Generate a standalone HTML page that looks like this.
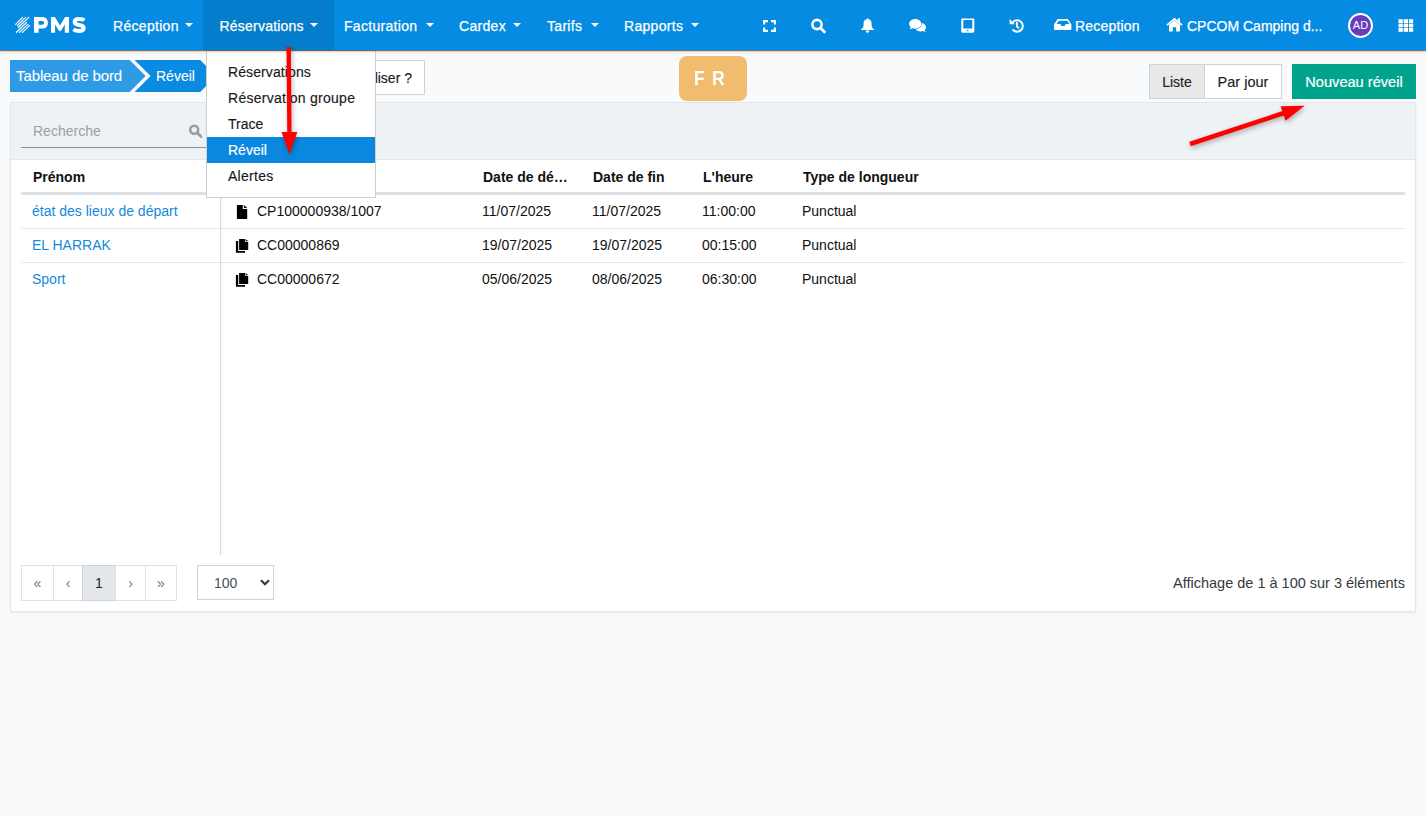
<!DOCTYPE html>
<html><head><meta charset="utf-8">
<style>
*{box-sizing:border-box;margin:0;padding:0}
html,body{width:1426px;height:816px;overflow:hidden}
body{background:#f9fafc;font-family:"Liberation Sans",sans-serif;position:relative;color:#212529}
.abs{position:absolute;white-space:nowrap}
#nav{position:absolute;z-index:5;left:0;top:0;width:1426px;height:50px;background:#058be2;box-shadow:0 1px 1px rgba(50,30,20,.55),0 2px 3px rgba(0,0,0,.12)}
.ni{position:absolute;top:1px;height:50px;color:#fff;font-size:14px;line-height:50px;white-space:nowrap;letter-spacing:.3px;-webkit-text-stroke:.25px #fff}
.cr{position:absolute;top:23px;width:0;height:0;border-left:4px solid transparent;border-right:4px solid transparent;border-top:4px solid #fff}
.caret{display:inline-block;width:0;height:0;border-left:4px solid transparent;border-right:4px solid transparent;border-top:4px solid #fff;vertical-align:middle;margin-left:8px;position:relative;top:-1px}
#active{position:absolute;left:203px;top:0;width:131px;height:50px;background:#047dcc}
.ico{position:absolute}
#panel{position:absolute;left:10px;top:102px;width:1406px;height:510px;background:#fff;border:1px solid #e3e7ea;box-shadow:0 1px 2px rgba(0,0,0,.08)}
#phead{position:absolute;left:0;top:0;width:1404px;height:57px;background:#eef2f5;border-bottom:1px solid #e3e7ea}
.th{position:absolute;top:169px;font-size:14px;font-weight:bold;color:#111;white-space:nowrap}
.td{position:absolute;font-size:14px;color:#111;white-space:nowrap}
.lnk{color:#1388dc}
.sep{position:absolute;left:21px;width:1384px;height:1px;background:#e5e8eb}
#dd{position:absolute;left:206px;top:50px;width:170px;height:148px;background:#fff;border:1px solid #cdd0d3}
.di{position:absolute;left:0;width:168px;height:26px;font-size:14px;line-height:26px;padding-left:21px;color:#16191c;white-space:nowrap;letter-spacing:.28px;-webkit-text-stroke:.15px #16191c}
.pg{position:absolute;top:565px;height:36px;border:1px solid #dee2e6;background:#fff;color:#6c757d;font-size:14px;line-height:35px;text-align:center}
</style></head><body>

<div id="nav">
  <div id="active"></div>
  <!-- logo -->
  <svg class="ico" style="left:0;top:0" width="100" height="50" viewBox="0 0 100 50">
    <g stroke="#fff" stroke-width="1.25" stroke-linecap="round">
      <line x1="15.6" y1="24.4" x2="22.6" y2="17.4"/><line x1="17.4" y1="25.6" x2="25.6" y2="17.4"/><line x1="18.6" y1="27.3" x2="28.7" y2="17.4"/>
      <line x1="16.5" y1="32.3" x2="26.6" y2="22.4"/><line x1="19.5" y1="32.4" x2="27.7" y2="24.4"/><line x1="22.5" y1="32.4" x2="29.6" y2="25.4"/>
    </g>
    <path fill="#fff" fill-rule="evenodd" d="M34 17h8.3c3.6 0 5.6 2.2 5.6 5.8s-2 5.8-5.6 5.8H38.6v4.2H34z M38.6 20.9v3.9h3.5c1.3 0 2-.7 2-1.95s-.7-1.95-2-1.95z"/>
    <path fill="#fff" d="M51 32.8V17h3.9l5.1 8.6 5.1-8.6h3.9v15.8h-4.2v-8.3l-3.9 6.5h-1.9l-3.9-6.4v8.2z"/>
    <path fill="none" stroke="#fff" stroke-width="4" d="M84.4 20.2C83 19.2 81 18.9 79.2 18.9 76.2 18.9 74.6 20.1 74.6 22 74.6 26.4 83.7 23.6 83.7 28 83.7 29.8 82 31 79 31 76.9 31 74.9 30.4 73.4 29.4"/>
  </svg>
  <div class="ni" style="left:113px">Réception</div><span class="cr" style="left:185px"></span>
  <div class="ni" style="left:219.5px;letter-spacing:.22px">Réservations</div><span class="cr" style="left:310px"></span>
  <div class="ni" style="left:344px">Facturation</div><span class="cr" style="left:426px"></span>
  <div class="ni" style="left:459px">Cardex</div><span class="cr" style="left:513px"></span>
  <div class="ni" style="left:547px">Tarifs</div><span class="cr" style="left:591px"></span>
  <div class="ni" style="left:624px">Rapports</div><span class="cr" style="left:691px"></span>

  <!-- expand -->
  <svg class="ico" style="left:762px;top:19px" width="15" height="14" viewBox="0 0 15 14" fill="#fff">
    <path d="M1 1h5v2.2H3.2V5.5H1z M14 1H9v2.2h2.8V5.5H14z M1 13h5v-2.2H3.2V8.5H1z M14 13H9v-2.2h2.8V8.5H14z"/>
  </svg>
  <!-- search -->
  <svg class="ico" style="left:810px;top:18px" width="17" height="16" viewBox="0 0 17 16">
    <circle cx="7" cy="6.5" r="4.6" fill="none" stroke="#fff" stroke-width="2.6"/>
    <line x1="10.5" y1="10" x2="14.5" y2="14" stroke="#fff" stroke-width="2.8" stroke-linecap="round"/>
  </svg>
  <!-- bell -->
  <svg class="ico" style="left:855px;top:12px" width="25" height="25" viewBox="855 12 25 25" fill="#fff">
    <path d="M867.5 18.4c-.6 0-1 .4-1 .9-1.9.5-2.9 2.1-2.9 4.2v1.7c0 2-1.2 3.3-2.6 4.3v.6h13.2v-.6c-1.4-1-2.6-2.3-2.6-4.3v-1.7c0-2.1-1-3.7-2.9-4.2 0-.5-.4-.9-1-.9z"/>
    <path d="M865.8 30.6h3.5c0 1.3-.8 2.3-1.75 2.3s-1.75-1-1.75-2.3z"/>
  </svg>
  <!-- comments -->
  <svg class="ico" style="left:900px;top:12px" width="30" height="25" viewBox="900 12 30 25" fill="#fff">
    <path d="M920.6 22.9c3.1 0 5.4 2 5.4 4.4 0 1.2-.5 2.2-1.3 3 .2.6.6 1.1 1.2 1.6-1.2 0-2.2-.3-3-.8-.7.2-1.5.3-2.3.3-2.2 0-4.1-.9-5-2.3 3.6-.2 6.2-2.4 6.2-5.3 0-.3 0-.6-.1-.9z"/>
    <path d="M915.3 18.9c3.4 0 6.1 2.2 6.1 4.9s-2.7 4.9-6.1 4.9c-.8 0-1.6-.1-2.3-.4-.9.6-2.2.9-3.7.8.7-.5 1.3-1.2 1.5-1.9-1.1-.9-1.7-2.1-1.7-3.4 0-2.7 2.800-4.900 6.2-4.900z"/>
  </svg>
  <!-- tablet -->
  <svg class="ico" style="left:961px;top:18px" width="14" height="15" viewBox="0 0 14 15" fill="#fff">
    <path fill-rule="evenodd" d="M1.5 0.6h10.6c.7 0 1.2.5 1.2 1.2v11.8c0 .7-.5 1.2-1.2 1.2H1.5c-.7 0-1.2-.5-1.2-1.2V1.8c0-.7.5-1.2 1.2-1.2zM2.3 2.1v8.4h9V2.1zM6.8 11.7a.8.8 0 1 0 0 1.6a.8.8 0 1 0 0-1.6z"/>
  </svg>
  <!-- history -->
  <svg class="ico" style="left:1004px;top:14px" width="26" height="24" viewBox="1004 14 26 24" fill="none">
    <path d="M1013.1 21.9A5.7 5.7 0 1 1 1013.1 30" stroke="#fff" stroke-width="2" stroke-linecap="round"/>
    <path d="M1009.6 18.9v5.3h5.3z" fill="#fff"/>
    <path d="M1016.9 22.6v4l1.7 1.3" stroke="#fff" stroke-width="1.8" stroke-linecap="round"/>
  </svg>
  <!-- inbox -->
  <svg class="ico" style="left:1054px;top:18px" width="18" height="13" viewBox="0 0 18 13" fill="#fff">
    <path fill-rule="evenodd" d="M4.3 0.9h8.8c.5 0 .9.3 1.1.7l3.2 4.9v4.5c0 .6-.5 1.1-1.1 1.1H1.1C.5 12.1 0 11.6 0 11V6.5l3.2-4.9c.2-.4.6-.7 1.1-.7zM4.8 2.7L2.6 6.1h3.8l1 1.9h3.2l1-1.9h3.8l-2.2-3.4z"/>
  </svg>
  <div class="ni" style="left:1075px;letter-spacing:.2px">Reception</div>
  <!-- home -->
  <svg class="ico" style="left:1166px;top:17px" width="17" height="15" viewBox="0 0 17 15" fill="#fff">
    <path d="M8.5 3.2L3 7.8v6.2c0 .3.2.5.5.5h3.3v-4.2h3.4v4.2h3.3c.3 0 .5-.2.5-.5V7.8z"/>
    <path d="M8.5 0.8L0.4 7.4l1.1 1.3L8.5 3l7 5.7 1.1-1.3-2.6-2.1V1.2h-2.2v2.3z"/>
  </svg>
  <div class="ni" style="left:1187px;letter-spacing:0">CPCOM Camping d...</div>
  <!-- avatar -->
  <div class="abs" style="left:1348px;top:13px;width:25px;height:25px;border-radius:50%;background:#6a3bbe;border:2px solid #fff;color:#fff;font-size:11px;line-height:21px;text-align:center">AD</div>
  <!-- grid -->
  <svg class="ico" style="left:1398px;top:19px" width="16" height="13" viewBox="0 0 16 13" fill="#fff">
    <rect x="0.5" y="0.2" width="4.3" height="3.8"/><rect x="5.7" y="0.2" width="4.3" height="3.8"/><rect x="10.9" y="0.2" width="4.3" height="3.8"/>
    <rect x="0.5" y="4.6" width="4.3" height="3.8"/><rect x="5.7" y="4.6" width="4.3" height="3.8"/><rect x="10.9" y="4.6" width="4.3" height="3.8"/>
    <rect x="0.5" y="9" width="4.3" height="3.8"/><rect x="5.7" y="9" width="4.3" height="3.8"/><rect x="10.9" y="9" width="4.3" height="3.8"/>
  </svg>
</div>

<!-- breadcrumb -->
<svg class="ico" style="left:10px;top:60px" width="210" height="32" viewBox="0 0 210 32">
  <polygon points="0,0 119.6,0 135.6,16 119.6,32 0,32" fill="#2f9be6"/>
  <polygon points="124.6,0 190.2,0 206.2,16 190.2,32 124.6,32 140.6,16" fill="#0a8ae0"/>
</svg>
<div class="abs" style="left:16px;top:60px;line-height:32px;font-size:15px;color:#fff;letter-spacing:-.1px;-webkit-text-stroke:.1px #fff">Tableau de bord</div>
<div class="abs" style="left:156px;top:60px;line-height:32px;font-size:14px;color:#fff;-webkit-text-stroke:.1px #fff">Réveil</div>

<!-- utiliser button -->
<div class="abs" style="left:300px;top:60px;width:125px;height:35px;border:1px solid #ccd3da;background:#fff"></div>
<div class="abs" style="left:300px;top:61px;width:125px;padding-right:13px;text-align:right;line-height:35px;font-size:14px;color:#16191c;-webkit-text-stroke:.15px #16191c">Utiliser ?</div>

<!-- FR badge -->
<div class="abs" style="left:679px;top:56px;width:68px;height:45px;border-radius:8px;background:#f2bc6e"></div>
<div class="abs" style="left:694.3px;top:56px;color:#fff;font-weight:bold;font-size:20px;line-height:45px;transform:scaleX(.86);transform-origin:0 0">F</div>
<div class="abs" style="left:711.6px;top:56px;color:#fff;font-weight:bold;font-size:20px;line-height:45px;transform:scaleX(.88);transform-origin:0 0">R</div>

<!-- view buttons -->
<div class="abs" style="left:1149px;top:64px;width:56px;height:35px;border:1px solid #ccd3da;background:#e8e8e8;font-size:14px;line-height:35px;text-align:center;color:#222;-webkit-text-stroke:.15px #222">Liste</div>
<div class="abs" style="left:1204px;top:64px;width:78px;height:35px;border:1px solid #ccd3da;background:#fff;font-size:14.5px;line-height:35px;text-align:center;color:#222;-webkit-text-stroke:.15px #222">Par jour</div>
<div class="abs" style="left:1292px;top:64px;width:124px;height:35px;background:#00a38c;font-size:14.6px;line-height:37px;text-align:center;color:#fff;-webkit-text-stroke:.2px #fff">Nouveau réveil</div>

<div id="panel">
  <div id="phead"></div>
</div>

<!-- search -->
<div class="abs" style="left:33px;top:123px;font-size:14px;line-height:17px;color:#9aa0a6">Recherche</div>
<svg class="ico" style="left:188px;top:124px" width="15" height="15" viewBox="0 0 15 15">
  <circle cx="6.2" cy="5.8" r="4" fill="none" stroke="#9a9c9e" stroke-width="2.5"/>
  <line x1="9.2" y1="8.8" x2="13" y2="12.6" stroke="#9a9c9e" stroke-width="2.7" stroke-linecap="round"/>
</svg>
<div class="abs" style="left:21px;top:147px;width:200px;height:1px;background:#8a8f94"></div>

<!-- table header -->
<div class="th" style="left:33px">Prénom</div>
<div class="th" style="left:483px">Date de dé…</div>
<div class="th" style="left:593px">Date de fin</div>
<div class="th" style="left:703px">L'heure</div>
<div class="th" style="left:803px">Type de longueur</div>
<div class="abs" style="left:21px;top:192px;width:1384px;height:3px;background:#dee2e6"></div>

<!-- rows -->
<div class="td lnk" style="left:32px;top:203px">état des lieux de départ</div>
<div class="td lnk" style="left:32px;top:237px">EL HARRAK</div>
<div class="td lnk" style="left:32px;top:271px">Sport</div>
<div class="sep" style="top:228px"></div>
<div class="sep" style="top:262px"></div>
<div class="abs" style="left:220px;top:195px;width:1px;height:360px;background:#d2d7dd;box-shadow:2px 0 2px rgba(0,0,0,.05)"></div>

<svg class="ico" style="left:236px;top:204px" width="12" height="16" viewBox="236 204 12 16" fill="#000">
  <path d="M237.4 204.9h5.4v4.1h4.4v9.4c0 .3-.2.5-.5.5h-9.3c-.3 0-.5-.2-.5-.5v-13c0-.3.2-.5.5-.5z M243.9 204.9l3.3 3.2h-3.3z"/>
</svg>
<svg class="ico" style="left:235px;top:238px" width="14" height="15" viewBox="235 238 14 15" fill="#000">
  <path d="M239.1 238.9h5.8v2.8h3.3v8.3h-9.1z M245.6 238.9l2.4 2.2h-2.4z M235.9 240.9h2.3v10h6.8v1.9h-9.1z"/>
</svg>
<svg class="ico" style="left:235px;top:272px" width="14" height="15" viewBox="235 238 14 15" fill="#000">
  <path d="M239.1 238.9h5.8v2.8h3.3v8.3h-9.1z M245.6 238.9l2.4 2.2h-2.4z M235.9 240.9h2.3v10h6.8v1.9h-9.1z"/>
</svg>

<div class="td" style="left:257px;top:203px">CP100000938/1007</div>
<div class="td" style="left:257px;top:237px">CC00000869</div>
<div class="td" style="left:257px;top:271px">CC00000672</div>
<div class="td" style="left:482px;top:203px">11/07/2025</div>
<div class="td" style="left:482px;top:237px">19/07/2025</div>
<div class="td" style="left:482px;top:271px">05/06/2025</div>
<div class="td" style="left:592px;top:203px">11/07/2025</div>
<div class="td" style="left:592px;top:237px">19/07/2025</div>
<div class="td" style="left:592px;top:271px">08/06/2025</div>
<div class="td" style="left:702px;top:203px">11:00:00</div>
<div class="td" style="left:702px;top:237px">00:15:00</div>
<div class="td" style="left:702px;top:271px">06:30:00</div>
<div class="td" style="left:802px;top:203px">Punctual</div>
<div class="td" style="left:802px;top:237px">Punctual</div>
<div class="td" style="left:802px;top:271px">Punctual</div>

<!-- pagination -->
<div class="pg" style="left:21px;width:33px">«</div>
<div class="pg" style="left:53px;width:30px">‹</div>
<div class="pg" style="left:82px;width:34px;background:#e4e7ea;color:#1d2125;border-color:#cfd4d9">1</div>
<div class="pg" style="left:115px;width:31px">›</div>
<div class="pg" style="left:145px;width:32px">»</div>
<div class="abs" style="left:197px;top:565px;width:77px;height:35px;border:1px solid #ced4da;background:#fff"></div>
<div class="abs" style="left:214px;top:566px;line-height:35px;font-size:14px;color:#495057">100</div>
<svg class="ico" style="left:259px;top:578px" width="12" height="9" viewBox="0 0 12 9">
  <path d="M2 2.3l4 4l4-4" fill="none" stroke="#343a40" stroke-width="2.2"/>
</svg>
<div class="abs" style="left:1173px;top:575px;font-size:14.5px;line-height:17px;color:#343a40">Affichage de 1 à 100 sur 3 éléments</div>

<!-- dropdown -->
<div id="dd">
  <div class="di" style="top:8px;letter-spacing:.1px">Réservations</div>
  <div class="di" style="top:34px">Réservation groupe</div>
  <div class="di" style="top:60px;letter-spacing:0">Trace</div>
  <div class="di" style="top:86px;background:#0a88e0;color:#fff;-webkit-text-stroke:.2px #fff;letter-spacing:0">Réveil</div>
  <div class="di" style="top:112px">Alertes</div>
</div>

<!-- red arrows -->
<svg class="ico" style="z-index:10;left:0;top:0;filter:drop-shadow(1px 2px 2.5px rgba(0,0,0,.3))" width="1426" height="200" viewBox="0 0 1426 200">
  <line x1="288.7" y1="47" x2="289.4" y2="134" stroke="#f00" stroke-width="4.3"/>
  <polygon points="281.5,132 297.3,132 289.5,154.6" fill="#f00"/>
  <line x1="1190" y1="144" x2="1284" y2="113" stroke="#f00" stroke-width="4.5"/>
  <polygon points="1280.6,106.3 1285.5,120.7 1304.6,105.8" fill="#f00"/>
</svg>

</body></html>
